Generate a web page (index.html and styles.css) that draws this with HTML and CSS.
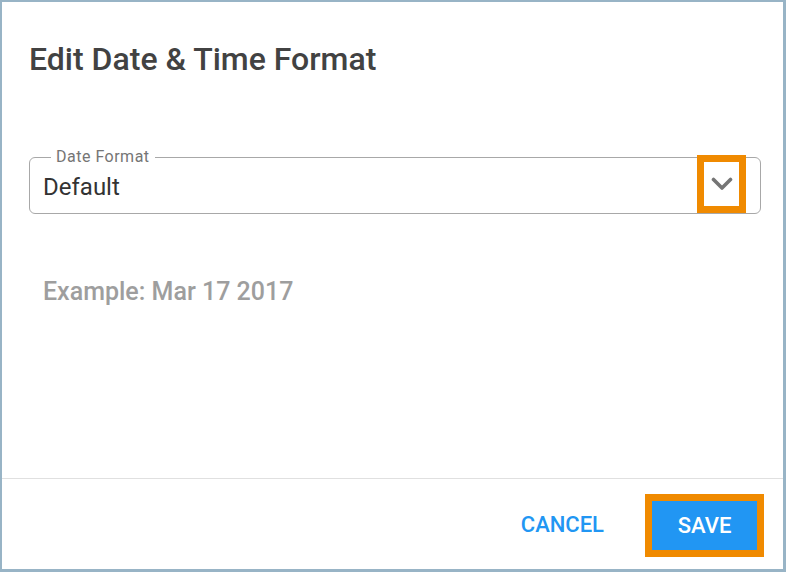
FILE: index.html
```html
<!DOCTYPE html>
<html lang="en">
<head>
    <meta charset="UTF-8">
    <title>Edit Date &amp; Time Format</title>
    <link rel="stylesheet" href="styles.css">
</head>
<body>

    <div class="dialog">
        <div class="dialog-body">
            <h1>Edit Date &amp; Time Format</h1>

            <fieldset class="select-field">
                <legend>Date Format</legend>
                <div class="select-value">Default</div>
                <div class="select-arrow">
                    <svg width="22" height="14" viewBox="0 0 22 14">
                        <path d="M2.5 2.5 L11 11 L19.5 2.5" fill="none" stroke="#757575" stroke-width="3.6" stroke-linecap="round" stroke-linejoin="round"/>
                    </svg>
                </div>
            </fieldset>

            <p class="example">Example: Mar 17 2017</p>
        </div>

        <div class="dialog-actions">
            <button class="btn-text">CANCEL</button>
            <button class="btn-save">SAVE</button>
        </div>
    </div>

</body>
</html>
```

FILE: styles.css
```css
body {
    margin: 0;
    font-family: Roboto, "Liberation Sans", sans-serif;
    background-color: #fff;
}

.dialog {
    box-sizing: border-box;
    width: 786px;
    height: 572px;
    border-style: solid;
    border-color: #98b4c6;
    border-width: 2px 3px 3px 2px;
    display: flex;
    flex-direction: column;
}

.dialog-body {
    flex: 1;
    padding: 0 22px 0 27px;
}

h1 {
    margin: 38px 0 0 0;
    font-size: 32px;
    line-height: 38px;
    font-weight: 500;
    color: #424242;
}

.select-field {
    position: relative;
    box-sizing: border-box;
    margin: 71px 0 0 0;
    padding: 0 0 0 13px;
    height: 65px;
    border: 1px solid #a8a8a8;
    border-radius: 6px;
    display: flex;
    align-items: center;
}

.select-field legend {
    margin-left: 8px;
    padding: 0 5px;
    font-size: 16px;
    line-height: 16px;
    color: #757575;
    letter-spacing: 0.5px;
}

.select-value {
    flex: 1;
    font-size: 24px;
    color: #333;
    margin-top: -5px;
}

/* highlighted arrow, drawn over the field border */
.select-arrow {
    position: absolute;
    right: 14px;
    top: -10px;
    width: 35px;
    height: 44px;
    border: 7px solid #f08a00;
    display: flex;
    align-items: center;
    justify-content: center;
    background-color: #fff;
}

.example {
    margin: 63px 0 0 14px;
    font-size: 25px;
    font-weight: 500;
    color: #9e9e9e;
}

.dialog-actions {
    height: 90px;
    border-top: 1px solid #e0e0e0;
    display: flex;
    align-items: center;
    justify-content: flex-end;
    padding-right: 19px;
    gap: 41px;
}

.dialog-actions button {
    font-family: Roboto, "Liberation Sans", sans-serif;
    font-size: 22px;
    font-weight: 500;
    cursor: pointer;
}

.btn-text {
    background: none;
    border: none;
    color: #2196f3;
    padding: 0;
}

.btn-save {
    box-sizing: border-box;
    width: 119px;
    height: 63px;
    background-color: #2196f3;
    color: #fff;
    border: 7px solid #f08a00;
    padding: 0;
    margin-top: 2px;
}
```
